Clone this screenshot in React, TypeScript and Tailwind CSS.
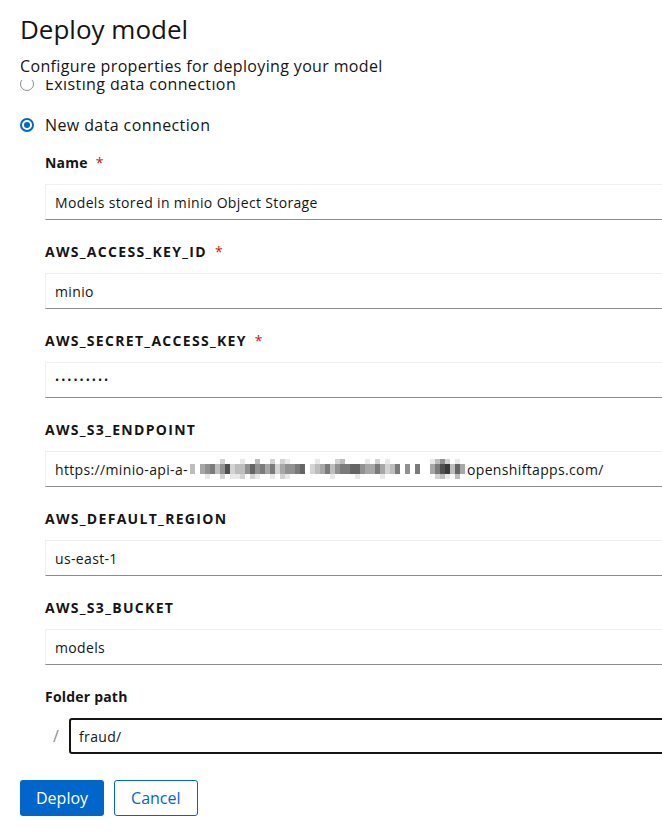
import React from "react";

const FONT = { fontFamily: '"Open Sans", "Liberation Sans", sans-serif' };

const midRow = "3045635823357564624556702346356677544642360506004689374";
const topRow = "0000002000100300202100000100023000010201000000001352010";
const botRow = "0001002011202100102100000000100001000010000000000231030";

function Pixelated() {
  const cols = midRow.length;
  const shade = (d: string) => {
    const v = 255 - parseInt(d, 10) * 22;
    return `rgb(${v},${v},${v})`;
  };
  const rects: React.ReactNode[] = [];
  for (let i = 0; i < cols; i++) {
    rects.push(<rect key={"t" + i} x={i * 5} y={0} width={5} height={5} fill={shade(topRow[i] || "0")} />);
    rects.push(<rect key={"m" + i} x={i * 5} y={5} width={5} height={10} fill={shade(midRow[i])} />);
    rects.push(<rect key={"b" + i} x={i * 5} y={15} width={5} height={5} fill={shade(botRow[i] || "0")} />);
  }
  return (
    <svg width={cols * 5} height={20} className="inline-block align-middle shrink-0 mx-[2px]" viewBox={`0 0 ${cols * 5} 20`}>
      {rects}
    </svg>
  );
}

function Field({ label, required, caps, children }: { label: string; required?: boolean; caps?: boolean; children: React.ReactNode }) {
  return (
    <div className="flex flex-col">
      <div className="flex items-center text-[14px] leading-[21px] font-bold text-[#151515] mb-[11px]">
        <span className={caps ? "tracking-[1.3px]" : "tracking-[0.2px]"}>{label}</span>
        {required && <span className="ml-[8px] text-[#c9190b] font-normal">*</span>}
      </div>
      {children}
    </div>
  );
}

function TextBox({ children }: { children: React.ReactNode }) {
  return (
    <div className="w-[700px] shrink-0 h-[36px] flex items-center border border-[#f0f0f0] border-b-[#8a8d90] px-[9px] text-[14px] tracking-[0.35px] text-[#151515] whitespace-nowrap overflow-hidden">
      {children}
    </div>
  );
}

export default function App() {
  return (
    <div className="w-[662px] h-[835px] overflow-hidden bg-white flex flex-col text-[#151515]" style={FONT}>
      <div className="px-[20px] pt-[12px] pb-[2px] shrink-0">
        <h1 className="text-[26px] leading-[34px] font-normal text-[#151515]">Deploy model</h1>
        <p className="mt-[8px] text-[16px] leading-[24px] tracking-[0.35px]">Configure properties for deploying your model</p>
      </div>
      <div className="flex-1 overflow-hidden">
        <div className="-mt-[8px] pl-[20px]">
          <div className="flex items-center h-[24px] gap-[11px] text-[16px] tracking-[0.4px]">
            <span className="w-[14px] h-[14px] rounded-full border border-[#8a8d90] bg-white shrink-0" />
            <span>Existing data connection</span>
          </div>
          <div className="flex items-center h-[24px] gap-[11px] text-[16px] tracking-[0.4px] mt-[17px]">
            <span className="w-[14px] h-[14px] rounded-full border-2 border-[#0066cc] bg-white flex items-center justify-center shrink-0">
              <span className="w-[6px] h-[6px] rounded-full bg-[#0066cc]" />
            </span>
            <span>New data connection</span>
          </div>
          <div className="pl-[25px] mt-[15px] flex flex-col gap-[21px]">
            <Field label="Name" required>
              <TextBox>Models stored in minio Object Storage</TextBox>
            </Field>
            <Field label="AWS_ACCESS_KEY_ID" required caps>
              <TextBox>minio</TextBox>
            </Field>
            <Field label="AWS_SECRET_ACCESS_KEY" required caps>
              <TextBox>
                <span className="tracking-[2px] text-[11px]">•••••••••</span>
              </TextBox>
            </Field>
            <Field label="AWS_S3_ENDPOINT" caps>
              <TextBox>
                <span>https://minio-api-a-</span>
                <Pixelated />
                <span>openshiftapps.com/</span>
              </TextBox>
            </Field>
            <Field label="AWS_DEFAULT_REGION" caps>
              <TextBox>us-east-1</TextBox>
            </Field>
            <Field label="AWS_S3_BUCKET" caps>
              <TextBox>models</TextBox>
            </Field>
            <Field label="Folder path">
              <div className="flex items-center">
                <span className="w-[24px] shrink-0 pl-[8px] text-[16px] text-[#8a8d90]">/</span>
                <div className="w-[700px] shrink-0 h-[36px] flex items-center border-2 border-[#151515] rounded-[3px] px-[8px] text-[14px] tracking-[0.35px]">
                  fraud/
                </div>
              </div>
            </Field>
          </div>
        </div>
        <div className="px-[20px] mt-[26px] flex gap-[10px]">
          <button className="h-[36px] px-[16px] rounded-[3px] bg-[#0066cc] text-white text-[16px]">Deploy</button>
          <button className="h-[36px] px-[16px] rounded-[3px] border border-[#0066cc] text-[#0066cc] text-[16px] bg-white">Cancel</button>
        </div>
      </div>
    </div>
  );
}
